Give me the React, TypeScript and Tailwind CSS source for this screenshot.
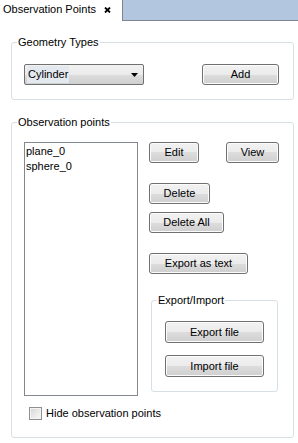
import React from "react";

const btn =
  "flex items-center justify-center h-[21px] rounded-[3px] border border-[#707070] bg-[linear-gradient(#f2f2f2,#ebebeb_50%,#dddddd_50%,#cfcfcf)] shadow-[inset_0_0_0_1px_#fcfcfc] text-[11px] leading-none text-black";

function Group({ label, className, children }: { label: string; className?: string; children: React.ReactNode }) {
  return (
    <div className={"relative rounded-[3px] border border-[#d5dfe5] " + (className ?? "")}>
      <span className="absolute -top-[8px] left-[5px] bg-white px-[1px] text-[11px] leading-[14px] text-black">
        {label}
      </span>
      {children}
    </div>
  );
}

export default function App() {
  return (
    <div className="w-[298px] h-[443px] bg-white overflow-hidden font-['Liberation_Sans',Arial,sans-serif] text-[11px] text-black">
      {/* tab bar */}
      <div className="flex h-[21px]">
        <div className="flex w-[122px] items-center pl-[3px] pb-[2px]">
          <span>Observation Points</span>
          <svg className="ml-[8px] mt-[1px]" width="7" height="6" viewBox="0 0 7 6">
            <path d="M1 0.5L6 5.5M6 0.5L1 5.5" stroke="#000" strokeWidth="1.8" />
          </svg>
        </div>
        <div className="flex-1 bg-[#b2c6df] border-l border-b border-[#7f8590]" />
      </div>

      <div className="px-[11px] pr-[4px]">
        {/* Geometry types */}
        <Group label="Geometry Types" className="mt-[21px] h-[58px]">
          <div className="flex justify-between pt-[21px] pl-[12px] pr-[14px]">
            <div className="flex h-[21px] w-[120px] items-center justify-between rounded-[2px] border border-[#707070] bg-[linear-gradient(#f2f2f2,#ebebeb_50%,#dddddd_50%,#cfcfcf)] pl-[2px] pr-[5px]">
              <span className="bg-[#e4e9f0] px-[1px]">Cylinder</span>
              <svg width="7" height="4" viewBox="0 0 7 4">
                <path d="M0 0H7L3.5 4Z" fill="#000" />
              </svg>
            </div>
            <div className={btn + " w-[77px] text-[#0a1a4a]"}>Add</div>
          </div>
        </Group>

        {/* Observation points */}
        <Group label="Observation points" className="mt-[22px] h-[316px]">
          <div className="flex pt-[19px] pl-[12px]">
            <div className="h-[254px] w-[114px] border border-[#828790] pl-[1px] pt-[1px] leading-[15px]">
              <div>plane_0</div>
              <div>sphere_0</div>
            </div>
            <div className="ml-[11px] flex w-[130px] flex-col">
              <div className="flex">
                <div className={btn + " w-[50px]"}>Edit</div>
                <div className={btn + " ml-[27px] w-[53px]"}>View</div>
              </div>
              <div className={btn + " mt-[20px] w-[61px]"}>Delete</div>
              <div className={btn + " mt-[8px] w-[75px]"}>Delete All</div>
              <div className={btn + " mt-[20px] w-[99px]"}>Export as text</div>
              <Group label="Export/Import" className="mt-[26px] ml-[2px] h-[92px] w-[127px]">
                <div className="flex flex-col pt-[20px] pl-[13px]">
                  <div className={btn + " h-[22px] w-[99px]"}>Export file</div>
                  <div className={btn + " mt-[12px] h-[22px] w-[99px]"}>Import file</div>
                </div>
              </Group>
            </div>
          </div>
          <div className="mt-[9px] flex items-center pl-[17px]">
            <div className="h-[13px] w-[13px] border border-[#8f8f8f] bg-[linear-gradient(135deg,#d6d6d6,#fafafa)] shadow-[inset_0_0_0_1px_#f4f4f4]" />
            <span className="ml-[4px]">Hide observation points</span>
          </div>
        </Group>
      </div>
    </div>
  );
}
